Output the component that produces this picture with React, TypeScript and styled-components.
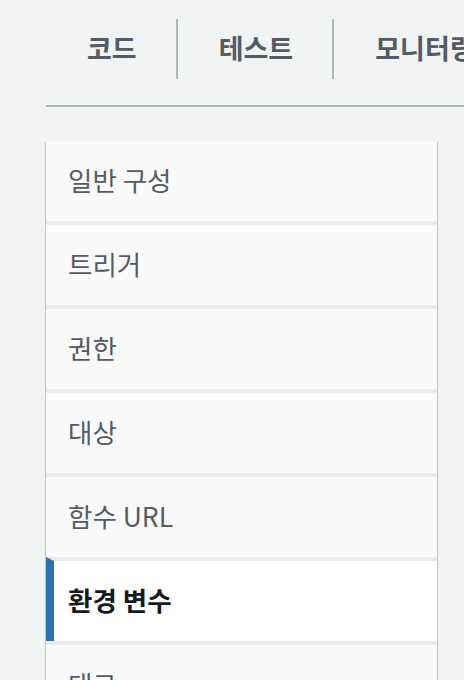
import React from 'react';
import styled, { createGlobalStyle } from 'styled-components';

const GlobalStyle = createGlobalStyle`
  html, body {
    margin: 0;
    padding: 0;
    background: #f2f3f3;
    overflow: hidden;
  }
  body {
    font-family: "Noto Sans CJK KR", "Noto Sans", sans-serif;
    color: #545b64;
  }
  * { box-sizing: border-box; }
`;

const Page = styled.div`
  width: 464px;
  height: 680px;
  padding: 19px 0 0 46px;
  overflow: hidden;
`;

const TabBar = styled.ul`
  display: flex;
  list-style: none;
  margin: 0;
  padding: 0 0 26px;
  width: 700px;
  border-bottom: 2px solid #aab7b8;
`;

const Tab = styled.li<{ $first?: boolean }>`
  height: 60px;
  display: flex;
  align-items: center;
  padding: 0 39px 3px 41px;
  font-size: 27px;
  font-weight: 700;
  color: #545b64;
  white-space: nowrap;
  border-left: ${p => (p.$first ? 'none' : '2px solid #aab7b8')};
`;

const Menu = styled.ol`
  list-style: none;
  margin: 34px 0 0;
  padding: 0;
  width: 391px;
  background: #eaeded;
  box-shadow: 0 1px 1px 0 rgba(0, 28, 36, 0.3), 1px 1px 1px 0 rgba(0, 28, 36, 0.15),
    -1px 1px 1px 0 rgba(0, 28, 36, 0.15);
`;

const Item = styled.li<{ $active?: boolean; $first?: boolean }>`
  height: ${p => (p.$first ? '80px' : '84px')};
  display: flex;
  align-items: center;
  padding-left: ${p => (p.$active ? '14px' : '22px')};
  padding-bottom: 4px;
  font-size: 26.5px;
  background: ${p => (p.$active ? '#ffffff' : '#fafafa')};
  background-clip: padding-box;
  color: ${p => (p.$active ? '#16191f' : '#545b64')};
  font-weight: ${p => (p.$active ? 700 : 400)};
  border-top: ${p => (p.$first ? 'none' : '4px solid #eaeded')};
  border-left: ${p => (p.$active ? '8px solid #2d6fb7' : 'none')};
`;

const tabs = ['코드', '테스트', '모니터링'];
const items = ['일반 구성', '트리거', '권한', '대상', '함수 URL', '환경 변수', '태그', 'VPC'];

export default function App() {
  return (
    <>
      <GlobalStyle />
      <Page>
        <TabBar>
          {tabs.map((t, i) => (
            <Tab key={t} $first={i === 0}>
              {t}
            </Tab>
          ))}
        </TabBar>
        <Menu>
          {items.map((t, i) => (
            <Item key={t} $first={i === 0} $active={t === '환경 변수'}>
              {t}
            </Item>
          ))}
        </Menu>
      </Page>
    </>
  );
}
